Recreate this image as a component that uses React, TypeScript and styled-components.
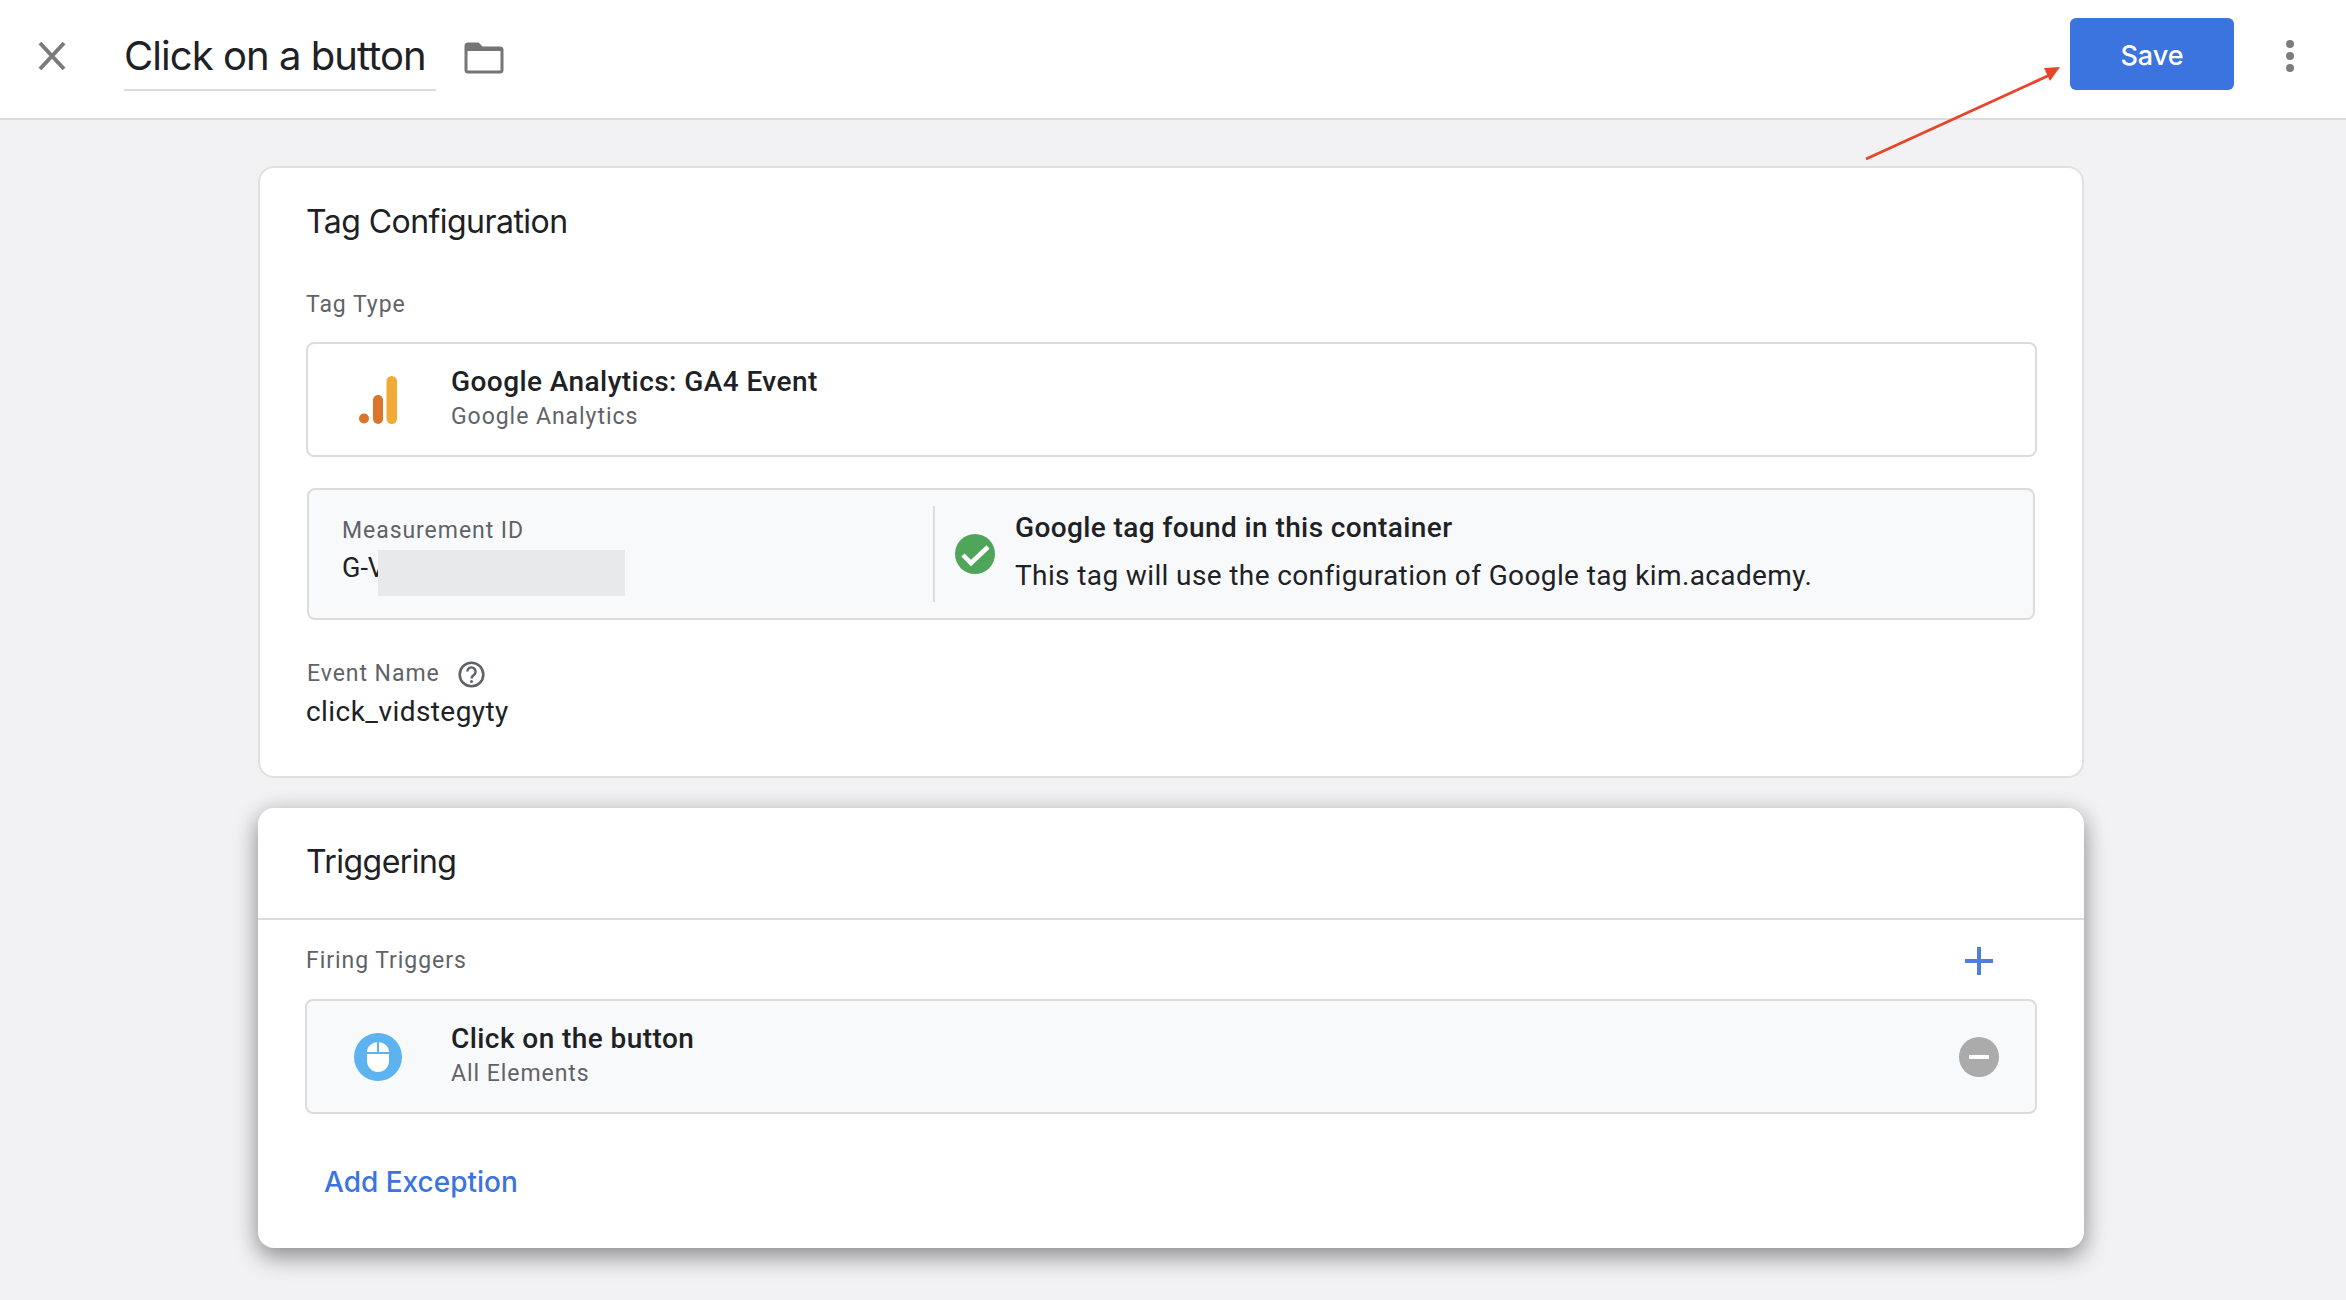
import React from "react";
import styled, { createGlobalStyle } from "styled-components";

const GlobalStyle = createGlobalStyle`
  html, body {
    margin: 0;
    padding: 0;
    background: #f2f2f4;
    font-family: Roboto, "Liberation Sans", sans-serif;
    color: #202124;
  }
  * { box-sizing: border-box; }
`;

const Page = styled.div`
  position: relative;
  width: 2346px;
  height: 1300px;
  overflow: hidden;
`;

const Header = styled.header`
  height: 120px;
  background: #fff;
  border-bottom: 2px solid #dcdcdc;
  display: flex;
  align-items: center;
  padding: 0 0 6px 34px;
`;

const IconButton = styled.button`
  display: flex;
  align-items: center;
  justify-content: center;
  padding: 0;
  border: 0;
  background: none;
`;

const FolderButton = styled(IconButton)`
  margin: 3px 0 0 28px;
`;

const MoreButton = styled(IconButton)`
  margin: 0 52px 0 0;
`;

const TitleField = styled.div`
  width: 312px;
  height: 62px;
  margin-left: 54px;
  margin-top: 8px;
  padding-top: 1px;
  border-bottom: 2px solid #dcdcdc;
  font-family: Inter, Roboto, sans-serif;
  font-size: 40px;
  line-height: 52px;
  letter-spacing: -0.95px;
  white-space: nowrap;
`;

const Spacer = styled.div`
  flex: 1;
`;

const SaveButton = styled.button`
  width: 164px;
  height: 72px;
  margin: 0 52px 4px 0;
  padding: 2px 0 0;
  border: 0;
  border-radius: 6px;
  background: #3b73df;
  color: #fff;
  font-family: Inter, Roboto, sans-serif;
  font-size: 27px;
  font-weight: 500;
`;

const Main = styled.main`
  display: flex;
  flex-direction: column;
  gap: 30px;
  width: 1826px;
  margin: 46px 0 0 258px;
`;

const Card = styled.section<{ $raised?: boolean }>`
  background: #fff;
  border-radius: 16px;
  border: ${(p) => (p.$raised ? "0" : "2px solid #e0e0e0")};
  box-shadow: ${(p) =>
    p.$raised ? "0 9px 24px rgba(0, 0, 0, 0.4), 0 0 22px rgba(0, 0, 0, 0.08)" : "none"};
`;

const ConfigBody = styled.div`
  height: 608px;
  padding: 34px 46px 0 46px;
  display: flex;
  flex-direction: column;
`;

const CardTitle = styled.h2`
  margin: 0;
  font-family: Inter, Roboto, sans-serif;
  font-size: 32px;
  font-weight: 400;
  line-height: 40px;
  letter-spacing: -0.55px;
`;

const FieldLabel = styled.div`
  color: #5f6368;
  font-size: 23px;
  line-height: 30px;
  letter-spacing: 0.95px;
`;

const TagTypeLabel = styled(FieldLabel)`
  margin-top: 48px;
`;

const TagRow = styled.div<{ $muted?: boolean }>`
  height: 115px;
  margin-top: ${(p) => (p.$muted ? "0" : "22px")};
  margin-right: ${(p) => (p.$muted ? "0" : "-1px")};
  padding-left: ${(p) => (p.$muted ? "1px" : "0")};
  display: flex;
  align-items: center;
  border: 2px solid #dcdcdc;
  border-radius: 8px;
  background: ${(p) => (p.$muted ? "#f8f9fb" : "#fff")};
`;

const RowIcon = styled.div`
  width: 143px;
  padding-right: 3px;
  flex: none;
  display: flex;
  justify-content: center;
`;

const RowText = styled.div`
  flex: 1;
  padding-bottom: 2px;
`;

const RowTitle = styled.div`
  font-size: 28px;
  font-weight: 500;
  line-height: 36px;
  letter-spacing: 0.43px;
`;

const RowSub = styled.div`
  color: #5f6368;
  font-size: 23px;
  line-height: 34px;
  letter-spacing: 0.95px;
`;

const InfoBox = styled.div`
  height: 132px;
  margin: 31px 1px 0;
  display: flex;
  align-items: center;
  border: 2px solid #dcdcdc;
  border-radius: 8px;
  background: #f8f9fb;
`;

const MeasurementCol = styled.div`
  width: 626px;
  height: 96px;
  padding: 10px 0 0 33px;
  border-right: 2px solid #dcdcdc;
  flex: none;
`;

const MeasurementValue = styled.div`
  position: relative;
  margin-top: 7px;
  font-size: 27px;
  line-height: 30px;
`;

const Redaction = styled.div`
  position: absolute;
  left: 36px;
  top: -3px;
  width: 247px;
  height: 46px;
  background: #e8e9eb;
`;

const FoundIcon = styled.div`
  margin: 0 20px 0 20px;
  display: flex;
`;

const FoundText = styled.div`
  display: flex;
  flex-direction: column;
  gap: 14px;
  padding-bottom: 4px;
  font-size: 28px;
  line-height: 34px;
  letter-spacing: 0.38px;
`;

const FoundTitle = styled.div`
  font-weight: 500;
  letter-spacing: 0.4px;
`;

const EventLabel = styled(FieldLabel)`
  margin: 39px 0 0 1px;
  display: flex;
  align-items: center;
  gap: 18px;
`;

const EventValue = styled.div`
  margin-top: 5px;
  font-size: 28px;
  line-height: 36px;
  letter-spacing: 0.44px;
`;

const TriggerHead = styled.div`
  height: 112px;
  padding: 34px 48px 0;
  border-bottom: 2px solid #dcdcdc;
`;

const TriggerBody = styled.div`
  height: 328px;
  padding: 0 47px;
  display: flex;
  flex-direction: column;
`;

const FiringRow = styled.div`
  height: 79px;
  display: flex;
  align-items: center;
  justify-content: space-between;
  padding: 2px 44px 0 1px;
`;

const MinusSlot = styled.div`
  margin-right: 36px;
  display: flex;
`;

const AddException = styled.a`
  margin: 50px 0 0 19px;
  color: #3b73df;
  font-family: Inter, Roboto, sans-serif;
  font-size: 28px;
  font-weight: 500;
  line-height: 36px;
`;

const Arrow = styled.svg`
  position: absolute;
  left: 1855px;
  top: 55px;
  pointer-events: none;
`;

const App: React.FC = () => {
  return (
    <Page>
      <GlobalStyle />
      <Header>
        <IconButton aria-label="Close">
          <svg width="36" height="36" viewBox="0 0 36 36">
            <path d="M6 5 L30 31 M30 5 L6 31" stroke="#7b7b7b" strokeWidth="4" fill="none" />
          </svg>
        </IconButton>
        <TitleField>Click on a button</TitleField>
        <FolderButton aria-label="Folder">
          <svg width="40" height="34" viewBox="0 0 40 34">
            <path
              d="M2 5 a2 2 0 0 1 2 -2 H14 L18 7 H36 a2 2 0 0 1 2 2 V29 a2 2 0 0 1 -2 2 H4 a2 2 0 0 1 -2 -2 Z"
              fill="none"
              stroke="#757575"
              strokeWidth="3"
            />
            <path d="M2 4 H14 L18 8 H38 V10 H2 Z" fill="#757575" />
          </svg>
        </FolderButton>
        <Spacer />
        <SaveButton>Save</SaveButton>
        <MoreButton aria-label="More">
          <svg width="8" height="32" viewBox="0 0 8 32">
            <circle cx="4" cy="4" r="4" fill="#7d7d7d" />
            <circle cx="4" cy="16" r="4" fill="#7d7d7d" />
            <circle cx="4" cy="28" r="4" fill="#7d7d7d" />
          </svg>
        </MoreButton>
      </Header>

      <Main>
        <Card>
          <ConfigBody>
            <CardTitle>Tag Configuration</CardTitle>
            <TagTypeLabel>Tag Type</TagTypeLabel>
            <TagRow>
              <RowIcon>
                <svg width="38" height="48" viewBox="0 0 38 48">
                  <circle cx="5" cy="42.5" r="5" fill="#d9762c" />
                  <rect x="14" y="19" width="10" height="29" rx="5" fill="#d9762c" />
                  <rect x="27.5" y="0" width="10.5" height="48" rx="5.2" fill="#f0ab37" />
                </svg>
              </RowIcon>
              <RowText>
                <RowTitle>Google Analytics: GA4 Event</RowTitle>
                <RowSub>Google Analytics</RowSub>
              </RowText>
            </TagRow>
            <InfoBox>
              <MeasurementCol>
                <FieldLabel>Measurement ID</FieldLabel>
                <MeasurementValue>
                  G-V
                  <Redaction />
                </MeasurementValue>
              </MeasurementCol>
              <FoundIcon>
                <svg width="40" height="40" viewBox="0 0 40 40">
                  <circle cx="20" cy="20" r="20" fill="#4fa65b" />
                  <path d="M8 21 L16 29 L33 13" stroke="#fff" strokeWidth="4.5" fill="none" />
                </svg>
              </FoundIcon>
              <FoundText>
                <FoundTitle>Google tag found in this container</FoundTitle>
                <div>This tag will use the configuration of Google tag kim.academy.</div>
              </FoundText>
            </InfoBox>
            <EventLabel>
              Event Name
              <svg width="27" height="27" viewBox="0 0 27 27">
                <circle cx="13.5" cy="13.5" r="11.8" fill="none" stroke="#5f6368" strokeWidth="2.6" />
                <path
                  d="M9.4 10.6 a4.1 4.1 0 1 1 6.6 3.2 c-1.6 1.2 -2.4 1.9 -2.4 3.6"
                  fill="none"
                  stroke="#5f6368"
                  strokeWidth="2.4"
                />
                <circle cx="13.5" cy="20.6" r="1.5" fill="#5f6368" />
              </svg>
            </EventLabel>
            <EventValue>click_vidstegyty</EventValue>
          </ConfigBody>
        </Card>

        <Card $raised>
          <TriggerHead>
            <CardTitle>Triggering</CardTitle>
          </TriggerHead>
          <TriggerBody>
            <FiringRow>
              <FieldLabel>Firing Triggers</FieldLabel>
              <svg width="28" height="28" viewBox="0 0 28 28">
                <path d="M14 0 V28 M0 14 H28" stroke="#4f7fdc" strokeWidth="4" fill="none" />
              </svg>
            </FiringRow>
            <TagRow $muted>
              <RowIcon>
                <svg width="48" height="48" viewBox="0 0 48 48">
                  <circle cx="24" cy="24" r="24" fill="#5cb3f0" />
                  <path d="M13 19 a11 10 0 0 1 22 0 V28 a11 11 0 0 1 -22 0 Z" fill="#fff" />
                  <path d="M24 9 V19 M13 20 H35" stroke="#5cb3f0" strokeWidth="2" fill="none" />
                </svg>
              </RowIcon>
              <RowText>
                <RowTitle>Click on the button</RowTitle>
                <RowSub>All Elements</RowSub>
              </RowText>
              <MinusSlot>
                <svg width="40" height="40" viewBox="0 0 40 40">
                  <circle cx="20" cy="20" r="20" fill="#ababab" />
                  <rect x="10" y="18" width="20" height="4" fill="#fff" />
                </svg>
              </MinusSlot>
            </TagRow>
            <AddException>Add Exception</AddException>
          </TriggerBody>
        </Card>
      </Main>

      <Arrow width="220" height="110" viewBox="0 0 220 110">
        <path d="M11 104 L197 19" stroke="#e8442a" strokeWidth="2.8" fill="none" />
        <path d="M205 12 L189 13 L195 26 Z" fill="#e8442a" />
      </Arrow>
    </Page>
  );
};

export default App;
